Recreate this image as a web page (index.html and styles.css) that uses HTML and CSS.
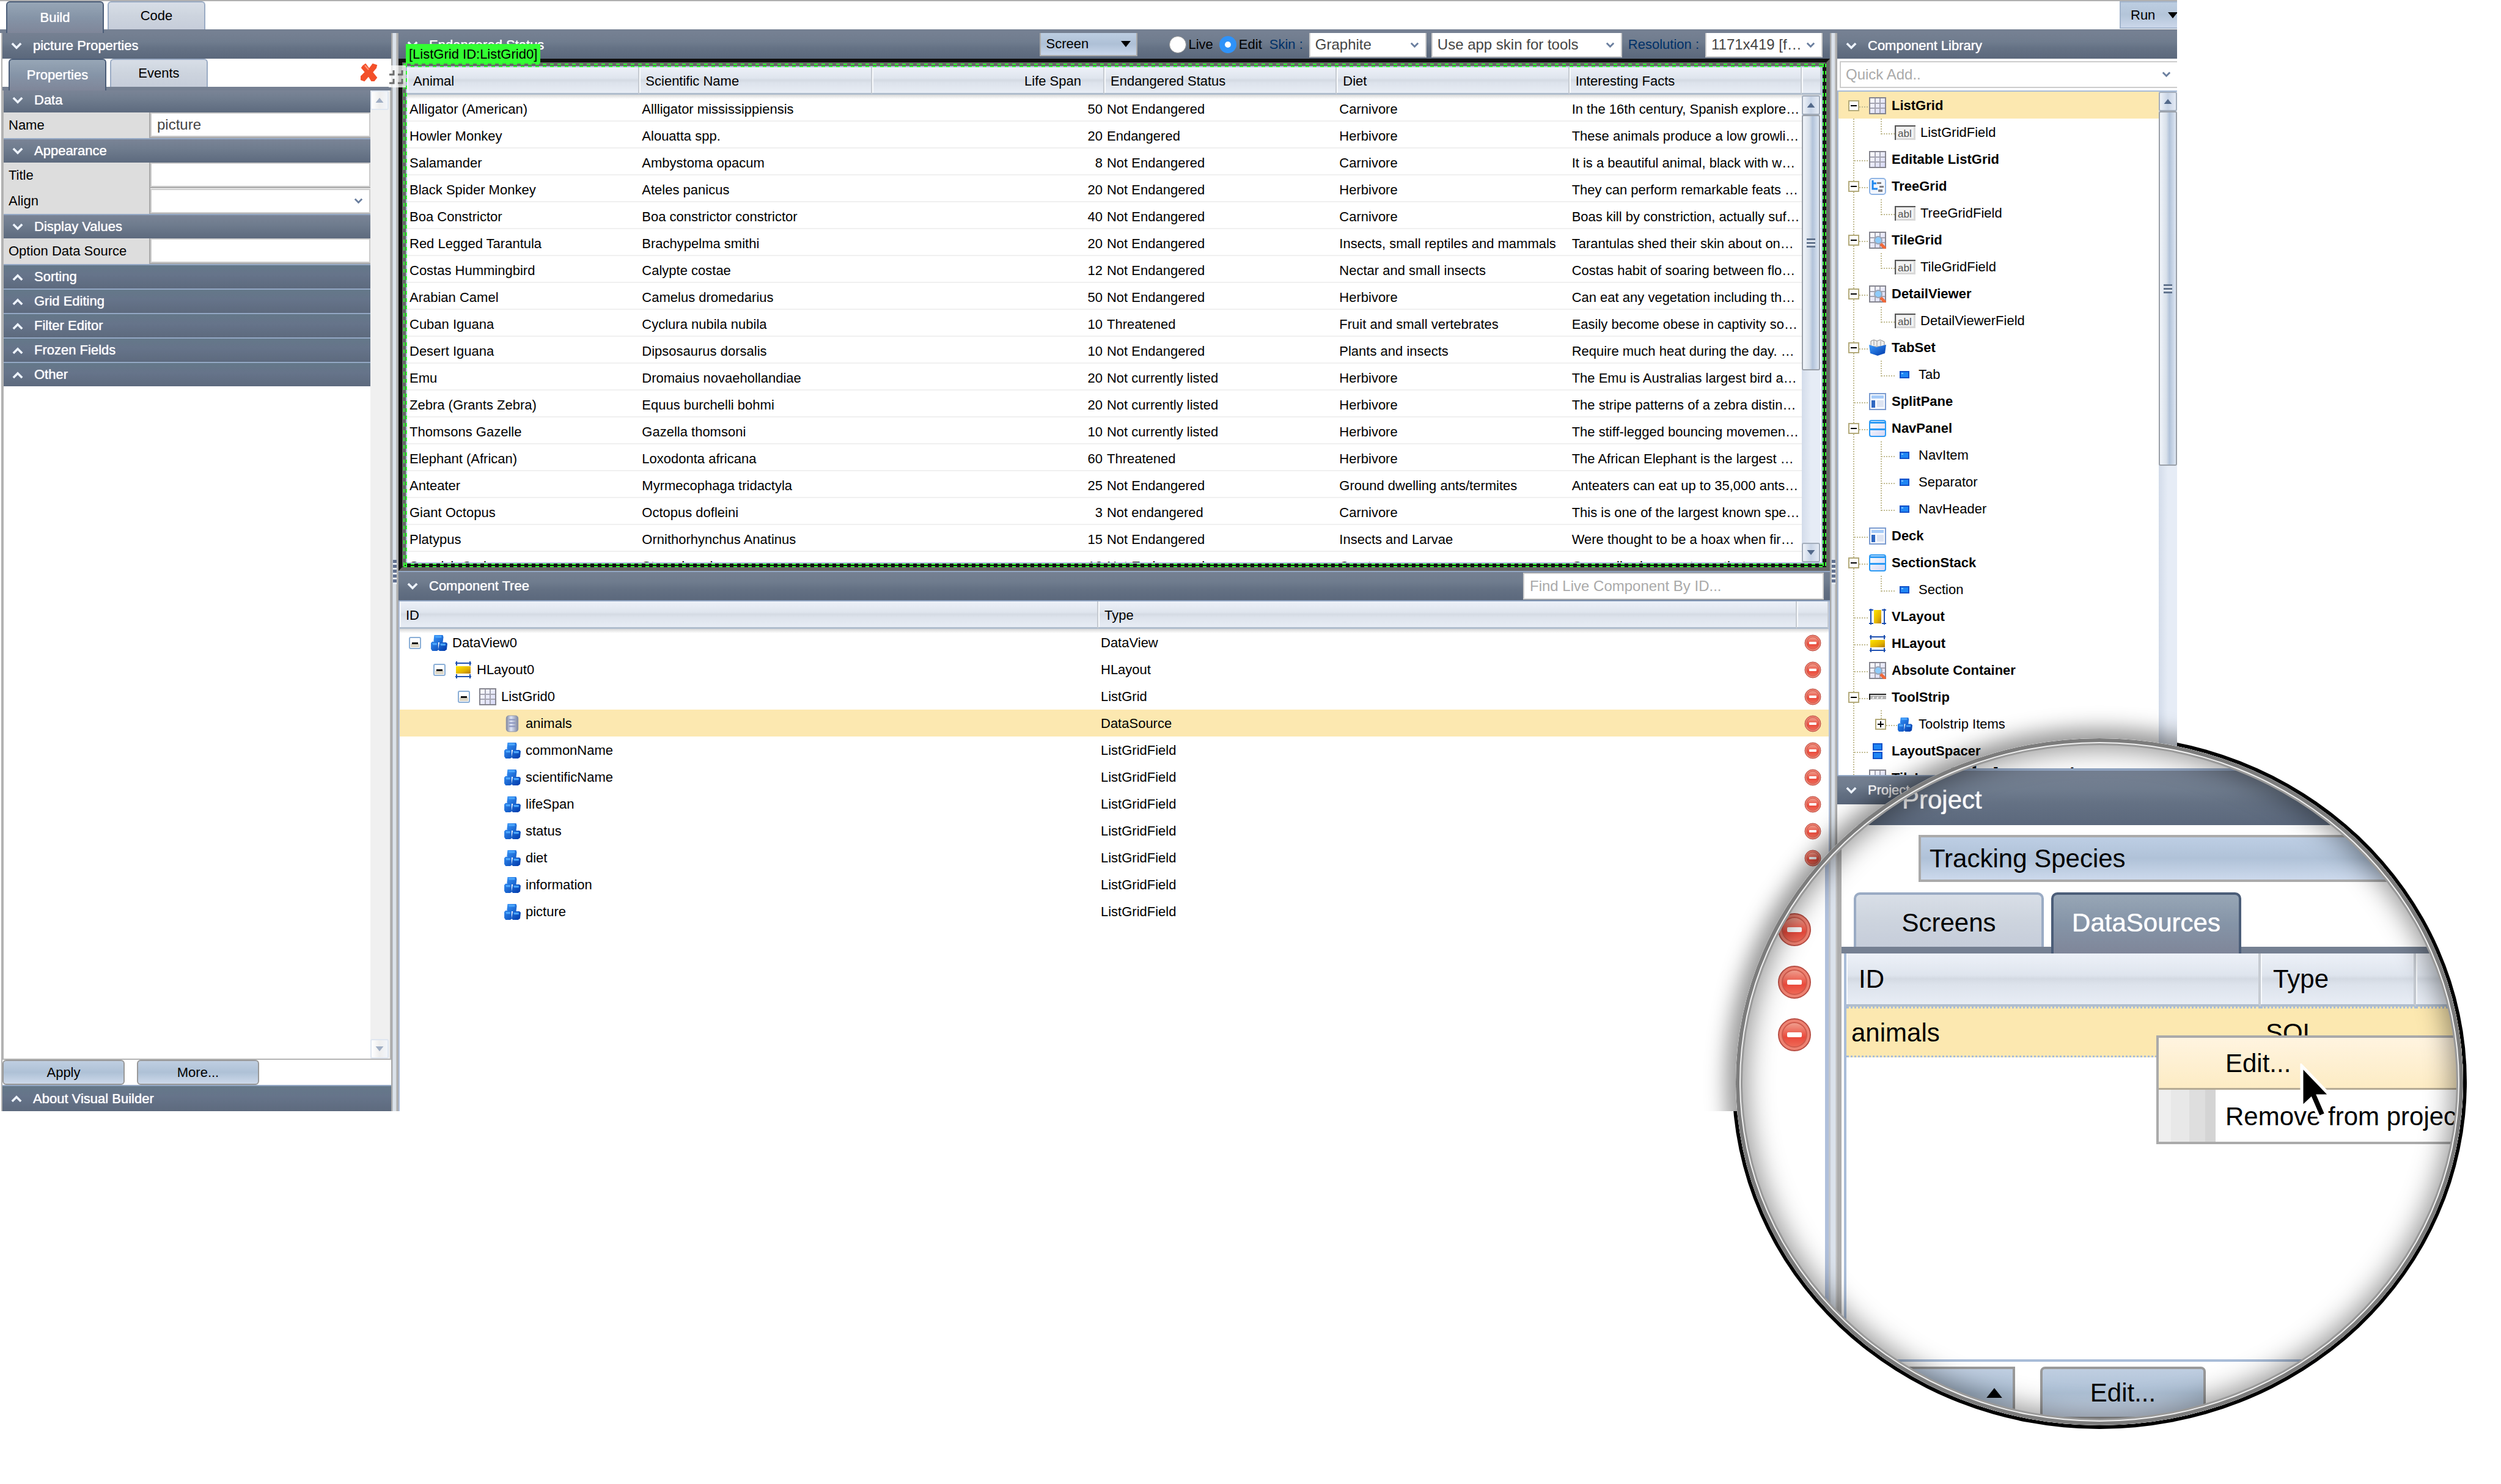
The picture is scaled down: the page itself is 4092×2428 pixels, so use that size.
FILE: index.html
```html
<!DOCTYPE html>
<html lang="en">
<head>
<meta charset="utf-8">
<title>Visual Builder</title>
<link rel="stylesheet" href="styles.css">
</head>
<body>
<svg class="defs" aria-hidden="true">
  <defs>
    <linearGradient id="gBlue" x1="0" y1="0" x2="1" y2="1"><stop offset="0" stop-color="#3a9bff"/><stop offset="1" stop-color="#0038a8"/></linearGradient>
    <linearGradient id="gGold" x1="0" y1="0" x2="1" y2="1"><stop offset="0" stop-color="#ffe600"/><stop offset=".6" stop-color="#e3b300"/><stop offset="1" stop-color="#b07800"/></linearGradient>
    <linearGradient id="gRed" x1="0" y1="0" x2="0" y2="1"><stop offset="0" stop-color="#f0a090"/><stop offset=".6" stop-color="#ea4a3c"/><stop offset="1" stop-color="#ee6a58"/></linearGradient>
    <linearGradient id="gCell" x1="0" y1="0" x2="1" y2="1"><stop offset="0" stop-color="#ffffff"/><stop offset="1" stop-color="#d4d6f4"/></linearGradient>
    <linearGradient id="gDb" x1="0" y1="0" x2="1" y2="0"><stop offset="0" stop-color="#7f869c"/><stop offset=".4" stop-color="#dfe5f8"/><stop offset="1" stop-color="#7f869c"/></linearGradient>
  </defs>
  <symbol id="down" viewBox="0 0 20 14"><path d="M2 2l8 8 8-8" fill="none" stroke="currentColor" stroke-width="4"/></symbol>
  <symbol id="up" viewBox="0 0 20 14"><path d="M2 12l8-8 8 8" fill="none" stroke="currentColor" stroke-width="4"/></symbol>
  <symbol id="caret" viewBox="0 0 16 10"><path d="M0 0h16L8 10z" fill="currentColor"/></symbol>
  <symbol id="caretup" viewBox="0 0 16 10"><path d="M0 10h16L8 0z" fill="currentColor"/></symbol>
  <symbol id="minus" viewBox="0 0 18 18"><path d="M1 1h16v16H1z" fill="#fff" stroke="#b3aa7a" stroke-width="2"/><path d="M4 8h10v2H4z" fill="#000"/></symbol>
  <symbol id="plus" viewBox="0 0 18 18"><path d="M1 1h16v16H1z" fill="#fff" stroke="#b3aa7a" stroke-width="2"/><path d="M4 8h10v2H4zM8 4h2v10H8z" fill="#000"/></symbol>
  <symbol id="fold" viewBox="0 0 20 20"><rect x="1" y="1" width="18" height="18" rx="2" fill="#fff" stroke="#8aaed6" stroke-width="2"/><path d="M3 11h14v6H3z" fill="#dcd6c6"/><path d="M5 9h10v3H5z" fill="#111"/></symbol>
  <symbol id="grid" viewBox="0 0 28 28"><path d="M1 1h26v26H1z" fill="url(#gCell)" stroke="#85858f" stroke-width="2"/><path d="M10 2v24M18 2v24M2 10h24M2 18h24" stroke="#a5a5b2" stroke-width="2"/></symbol>
  <symbol id="tile" viewBox="0 0 28 28"><use href="#grid"/><path d="M19 20l8 8" stroke="#f0693a" stroke-width="5"/><circle cx="15" cy="14" r="6" fill="#8ecbfa" stroke="#9aa4b4" stroke-width="2"/></symbol>
  <symbol id="treegrid" viewBox="0 0 28 28"><rect x="1" y="1" width="26" height="26" rx="4" fill="#f2f6fe" stroke="#8fb4e4" stroke-width="2"/><path d="M6 4v14h8M6 9h6" fill="none" stroke="#1e87ee" stroke-width="3"/><path d="M13 7h7v3h-7zM17 13h7v3h-7zM15 19h7v4h-7z" fill="#7f7f84"/></symbol>
  <symbol id="tabset" viewBox="0 0 28 28"><path d="M3 3l5-2 5 2 5-2 7 3v8H3z" fill="#eee" stroke="#8a8a8a"/><path d="M8 2v8M13 3v8M19 3v8" stroke="#999"/><path d="M0 9l12 4 16-4-2 14-12 4L2 23z" fill="url(#gBlue)"/></symbol>
  <symbol id="split" viewBox="0 0 28 28"><path d="M1 1h26v26H1z" fill="#f6f9fe" stroke="#7c9cd0" stroke-width="2"/><path d="M4 4h20v5H4z" fill="#a6cbf8"/><path d="M4 12h6v12H4z" fill="#2f68c2"/><path d="M13 12h11v11H13z" fill="#dde4f2"/></symbol>
  <symbol id="nav" viewBox="0 0 28 28"><rect x="1" y="1" width="26" height="26" rx="3" fill="url(#gCell)" stroke="#2c9af4" stroke-width="2"/><path d="M1 3h26v3H1zM1 14h26v3H1z" fill="#2c9af4"/></symbol>
  <symbol id="block" viewBox="0 0 16 12"><path d="M0 0h16v12H0z" fill="#0f50c8"/><path d="M2 2h12v8H2z" fill="#1f86f4"/><path d="M3 3h3v2H3z" fill="#7cc0ff"/></symbol>
  <symbol id="spacer" viewBox="0 0 28 28"><path d="M6 1h16v12H6zM6 15h16v12H6z" fill="#0f50c8"/><path d="M8 3h12v8H8zM8 17h12v8H8z" fill="#1f86f4"/></symbol>
  <symbol id="vlay" viewBox="0 0 28 28"><path d="M8 3h12v22H8z" fill="url(#gGold)"/><path d="M3 1v26M25 1v26M0 3h7M0 25h7M21 3h7M21 25h7" stroke="#1d4fb0" stroke-width="2"/></symbol>
  <symbol id="hlay" viewBox="0 0 28 28"><path d="M2 8h24v12H2z" fill="url(#gGold)"/><path d="M1 3h26M1 25h26M3 0v7M25 0v7M3 21v7M25 21v7" stroke="#1d4fb0" stroke-width="2"/></symbol>
  <symbol id="strip" viewBox="0 0 28 28"><path d="M0 8h28v2H0zM0 8h2v10H0z" fill="#222"/><path d="M2 11h26v6H2z" fill="#b4b4b4"/><path d="M5 16l3-4v4zM12 16l3-4v4zM19 16l3-4v4z" fill="#fff"/></symbol>
  <symbol id="cubes" viewBox="0 0 26 26"><path d="M6 1h13l1 3-1 8H7L5 10zM1 13l2-2h9v13l-2 1H3l-2-3zM14 12h10l2 2-1 9-3 2h-8l-2-2z" fill="url(#gBlue)"/><path d="M7 2h10v3H8zM3 13h7v3H4zM15 14h8v3h-7z" fill="#4ba5fb"/></symbol>
  <symbol id="db" viewBox="0 0 26 26"><rect x="4" y="1" width="18" height="24" rx="4" fill="url(#gDb)" stroke="#8d93a8"/><path d="M8 7h10M8 12h10M8 17h10" stroke="#8e98c0" stroke-width="2"/></symbol>
  <symbol id="del" viewBox="0 0 28 28"><circle cx="14" cy="14" r="13" fill="#ee8272" stroke="#b84e44"/><circle cx="14" cy="14" r="10" fill="url(#gRed)" stroke="#cf5a4c"/><rect x="8" y="12" width="12" height="4" rx="1" fill="#fff"/></symbol>
  <symbol id="cross" viewBox="0 0 28 30"><path d="M4 4l4-3 6 8 6-8 6 2-1 4-6 7 7 9-4 5-4 0-5-8-7 8-6-2 0-4 8-8-6-7z" fill="#f3502a" stroke="#f3502a" stroke-width="2"/><path d="M7 3l6 7" stroke="#ff9a80" stroke-width="2"/></symbol>
  <symbol id="field" viewBox="0 0 34 24"><path d="M0 0h34v24H0z" fill="#d8d8d8"/><path d="M0 0h34v2H2v22H0z" fill="#555"/><path d="M3 3h28v18H3z" fill="#f2f2f2"/><text x="5" y="19" font-family="Liberation Sans" font-size="17" fill="#555">abl</text></symbol>
</svg>

<div class="page">
  <div class="lens-shadow"></div>

  <div class="workspace">
    <header class="topbar">
      <nav class="tabs"><button class="tab on">Build</button><button class="tab">Code</button></nav>
      <button class="run">Run<svg class="caret"><use href="#caret"/></svg></button>
    </header>

    <div class="columns">
      <aside class="props">
        <h2 class="bar"><svg class="chev"><use href="#down"/></svg>picture Properties</h2>
        <div class="subtabs tabs">
          <button class="tab on">Properties</button><button class="tab">Events</button>
          <svg class="cross"><use href="#cross"/></svg>
        </div>
        <div class="propbox">
          <form class="propform">
            <h3 class="sect first"><svg class="chev"><use href="#down"/></svg>Data</h3>
            <div class="prop"><label for="p1">Name</label><input id="p1" value="picture"></div>
            <h3 class="sect"><svg class="chev"><use href="#down"/></svg>Appearance</h3>
            <div class="prop"><label for="p2">Title</label><input id="p2"></div>
            <div class="prop"><label for="p3">Align</label><span class="pick"><select id="p3"><option></option></select><svg class="pchev"><use href="#down"/></svg></span></div>
            <h3 class="sect"><svg class="chev"><use href="#down"/></svg>Display Values</h3>
            <div class="prop"><label for="p4">Option Data Source</label><input id="p4"></div>
            <h3 class="sect shut"><svg class="chev"><use href="#up"/></svg>Sorting</h3>
            <h3 class="sect shut"><svg class="chev"><use href="#up"/></svg>Grid Editing</h3>
            <h3 class="sect shut"><svg class="chev"><use href="#up"/></svg>Filter Editor</h3>
            <h3 class="sect shut"><svg class="chev"><use href="#up"/></svg>Frozen Fields</h3>
            <h3 class="sect shut"><svg class="chev"><use href="#up"/></svg>Other</h3>
          </form>
          <div class="scroll idle"><i class="sbtn"><svg><use href="#caretup"/></svg></i><i class="track"></i><i class="sbtn"><svg><use href="#caret"/></svg></i></div>
        </div>
        <div class="actions"><button class="btn">Apply</button><button class="btn">More...</button></div>
        <h2 class="bar about"><svg class="chev"><use href="#up"/></svg>About Visual Builder</h2>
      </aside>

      <div class="splitter"><i class="grip"></i></div>

      <main class="center">
        <div class="bar tools">
          <svg class="chev"><use href="#down"/></svg><h2>Endangered Status</h2>
          <button class="screen">Screen<svg class="caret"><use href="#caret"/></svg></button>
          <label class="radio"><input type="radio" name="mode">Live</label>
          <label class="radio"><input type="radio" name="mode" checked>Edit</label>
          <label class="cap" for="skin">Skin :</label>
          <span class="pick skin"><select id="skin"><option>Graphite</option></select><svg class="pchev"><use href="#down"/></svg></span>
          <span class="pick toolskin"><select aria-label="Tool skin"><option>Use app skin for tools</option></select><svg class="pchev"><use href="#down"/></svg></span>
          <label class="cap" for="res">Resolution :</label>
          <span class="pick skin"><select id="res"><option>1171x419 [f…</option></select><svg class="pchev"><use href="#down"/></svg></span>
        </div>

        <div class="frame"><div class="frame-in"><div class="canvas">
          <table class="grid animals">
            <colgroup><col><col><col><col><col><col><col class="c-scroll"></colgroup>
            <thead><tr><th>Animal</th><th>Scientific Name</th><th class="num">Life Span</th><th>Endangered Status</th><th>Diet</th><th>Interesting Facts</th><th></th></tr></thead>
            <tbody>
              <tr><td>Alligator (American)</td><td>Allligator mississippiensis</td><td>50</td><td>Not Endangered</td><td>Carnivore</td><td>In the 16th century, Spanish explore…</td><td></td></tr>
              <tr><td>Howler Monkey</td><td>Alouatta spp.</td><td>20</td><td>Endangered</td><td>Herbivore</td><td>These animals produce a low growli…</td><td></td></tr>
              <tr><td>Salamander</td><td>Ambystoma opacum</td><td>8</td><td>Not Endangered</td><td>Carnivore</td><td>It is a beautiful animal, black with w…</td><td></td></tr>
              <tr><td>Black Spider Monkey</td><td>Ateles panicus</td><td>20</td><td>Not Endangered</td><td>Herbivore</td><td>They can perform remarkable feats …</td><td></td></tr>
              <tr><td>Boa Constrictor</td><td>Boa constrictor constrictor</td><td>40</td><td>Not Endangered</td><td>Carnivore</td><td>Boas kill by constriction, actually suf…</td><td></td></tr>
              <tr><td>Red Legged Tarantula</td><td>Brachypelma smithi</td><td>20</td><td>Not Endangered</td><td>Insects, small reptiles and mammals</td><td>Tarantulas shed their skin about on…</td><td></td></tr>
              <tr><td>Costas Hummingbird</td><td>Calypte costae</td><td>12</td><td>Not Endangered</td><td>Nectar and small insects</td><td>Costas habit of soaring between flo…</td><td></td></tr>
              <tr><td>Arabian Camel</td><td>Camelus dromedarius</td><td>50</td><td>Not Endangered</td><td>Herbivore</td><td>Can eat any vegetation including th…</td><td></td></tr>
              <tr><td>Cuban Iguana</td><td>Cyclura nubila nubila</td><td>10</td><td>Threatened</td><td>Fruit and small vertebrates</td><td>Easily become obese in captivity so…</td><td></td></tr>
              <tr><td>Desert Iguana</td><td>Dipsosaurus dorsalis</td><td>10</td><td>Not Endangered</td><td>Plants and insects</td><td>Require much heat during the day. …</td><td></td></tr>
              <tr><td>Emu</td><td>Dromaius novaehollandiae</td><td>20</td><td>Not currently listed</td><td>Herbivore</td><td>The Emu is Australias largest bird a…</td><td></td></tr>
              <tr><td>Zebra (Grants Zebra)</td><td>Equus burchelli bohmi</td><td>20</td><td>Not currently listed</td><td>Herbivore</td><td>The stripe patterns of a zebra distin…</td><td></td></tr>
              <tr><td>Thomsons Gazelle</td><td>Gazella thomsoni</td><td>10</td><td>Not currently listed</td><td>Herbivore</td><td>The stiff-legged bouncing movemen…</td><td></td></tr>
              <tr><td>Elephant (African)</td><td>Loxodonta africana</td><td>60</td><td>Threatened</td><td>Herbivore</td><td>The African Elephant is the largest …</td><td></td></tr>
              <tr><td>Anteater</td><td>Myrmecophaga tridactyla</td><td>25</td><td>Not Endangered</td><td>Ground dwelling ants/termites</td><td>Anteaters can eat up to 35,000 ants…</td><td></td></tr>
              <tr><td>Giant Octopus</td><td>Octopus dofleini</td><td>3</td><td>Not endangered</td><td>Carnivore</td><td>This is one of the largest known spe…</td><td></td></tr>
              <tr><td>Platypus</td><td>Ornithorhynchus Anatinus</td><td>15</td><td>Not Endangered</td><td>Insects and Larvae</td><td>Were thought to be a hoax when fir…</td><td></td></tr>
              <tr><td>Spanish Crab</td><td>Stenorhynchus</td><td>12</td><td>Not Endangered</td><td>Crustaceans</td><td>Generally slow creatures that roam …</td><td></td></tr>
            </tbody>
          </table>
          <div class="scroll over"><i class="sbtn"><svg><use href="#caretup"/></svg></i><i class="thumb"></i><i class="track"></i><i class="sbtn"><svg><use href="#caret"/></svg></i></div>
        </div></div>
          <div class="marquee"></div>
          <div class="tag">[ListGrid ID:ListGrid0]</div>
          <svg class="corners" viewBox="0 0 28 36"><path d="M0 0h28v36H0z" fill="#fff" fill-opacity=".75"/><path d="M1 15h7V8M15 15h7V8M1 29h7v-7M15 29h7v-7" fill="none" stroke="#6b6b6b" stroke-width="3"/></svg>
        </div>

        <div class="bar treebar"><svg class="chev"><use href="#down"/></svg><h2>Component Tree</h2><input class="find" placeholder="Find Live Component By ID..." aria-label="Find Live Component By ID"></div>
        <div class="treebox">
          <table class="grid ctree">
            <colgroup><col><col><col class="c-del"></colgroup>
            <thead><tr><th>ID</th><th>Type</th><th></th></tr></thead>
            <tbody>
              <tr><td><div class="node l0"><svg class="fold"><use href="#fold"/></svg><svg class="ic"><use href="#cubes"/></svg>DataView0</div></td><td>DataView</td><td><svg class="del"><use href="#del"/></svg></td></tr>
              <tr><td><div class="node l1"><svg class="fold"><use href="#fold"/></svg><svg class="ic"><use href="#hlay"/></svg>HLayout0</div></td><td>HLayout</td><td><svg class="del"><use href="#del"/></svg></td></tr>
              <tr><td><div class="node l2"><svg class="fold"><use href="#fold"/></svg><svg class="ic"><use href="#grid"/></svg>ListGrid0</div></td><td>ListGrid</td><td><svg class="del"><use href="#del"/></svg></td></tr>
              <tr class="sel"><td><div class="node l3"><svg class="ic"><use href="#db"/></svg>animals</div></td><td>DataSource</td><td><svg class="del"><use href="#del"/></svg></td></tr>
              <tr><td><div class="node l3"><svg class="ic"><use href="#cubes"/></svg>commonName</div></td><td>ListGridField</td><td><svg class="del"><use href="#del"/></svg></td></tr>
              <tr><td><div class="node l3"><svg class="ic"><use href="#cubes"/></svg>scientificName</div></td><td>ListGridField</td><td><svg class="del"><use href="#del"/></svg></td></tr>
              <tr><td><div class="node l3"><svg class="ic"><use href="#cubes"/></svg>lifeSpan</div></td><td>ListGridField</td><td><svg class="del"><use href="#del"/></svg></td></tr>
              <tr><td><div class="node l3"><svg class="ic"><use href="#cubes"/></svg>status</div></td><td>ListGridField</td><td><svg class="del"><use href="#del"/></svg></td></tr>
              <tr><td><div class="node l3"><svg class="ic"><use href="#cubes"/></svg>diet</div></td><td>ListGridField</td><td><svg class="del"><use href="#del"/></svg></td></tr>
              <tr><td><div class="node l3"><svg class="ic"><use href="#cubes"/></svg>information</div></td><td>ListGridField</td><td><svg class="del"><use href="#del"/></svg></td></tr>
              <tr><td><div class="node l3"><svg class="ic"><use href="#cubes"/></svg>picture</div></td><td>ListGridField</td><td><svg class="del"><use href="#del"/></svg></td></tr>
            </tbody>
          </table>
        </div>
      </main>

      <div class="splitter"><i class="grip"></i></div>

      <aside class="library">
        <h2 class="bar"><svg class="chev"><use href="#down"/></svg>Component Library</h2>
        <div class="quick"><input placeholder="Quick Add.." aria-label="Quick Add"><svg class="pchev"><use href="#down"/></svg></div>
        <div class="libbox">
          <ul class="lib">
            <li><div class="row sel"><svg class="ex"><use href="#minus"/></svg><svg class="ic"><use href="#grid"/></svg>ListGrid</div>
              <ul><li><div class="row"><svg class="fi"><use href="#field"/></svg>ListGridField</div></li></ul></li>
            <li><div class="row"><i class="ex"></i><svg class="ic"><use href="#grid"/></svg>Editable ListGrid</div></li>
            <li><div class="row"><svg class="ex"><use href="#minus"/></svg><svg class="ic"><use href="#treegrid"/></svg>TreeGrid</div>
              <ul><li><div class="row"><svg class="fi"><use href="#field"/></svg>TreeGridField</div></li></ul></li>
            <li><div class="row"><svg class="ex"><use href="#minus"/></svg><svg class="ic"><use href="#tile"/></svg>TileGrid</div>
              <ul><li><div class="row"><svg class="fi"><use href="#field"/></svg>TileGridField</div></li></ul></li>
            <li><div class="row"><svg class="ex"><use href="#minus"/></svg><svg class="ic"><use href="#tile"/></svg>DetailViewer</div>
              <ul><li><div class="row"><svg class="fi"><use href="#field"/></svg>DetailViewerField</div></li></ul></li>
            <li><div class="row"><svg class="ex"><use href="#minus"/></svg><svg class="ic"><use href="#tabset"/></svg>TabSet</div>
              <ul><li><div class="row"><svg class="bl"><use href="#block"/></svg>Tab</div></li></ul></li>
            <li><div class="row"><i class="ex"></i><svg class="ic"><use href="#split"/></svg>SplitPane</div></li>
            <li><div class="row"><svg class="ex"><use href="#minus"/></svg><svg class="ic"><use href="#nav"/></svg>NavPanel</div>
              <ul><li><div class="row"><svg class="bl"><use href="#block"/></svg>NavItem</div></li>
                <li><div class="row"><svg class="bl"><use href="#block"/></svg>Separator</div></li>
                <li><div class="row"><svg class="bl"><use href="#block"/></svg>NavHeader</div></li></ul></li>
            <li><div class="row"><i class="ex"></i><svg class="ic"><use href="#split"/></svg>Deck</div></li>
            <li><div class="row"><svg class="ex"><use href="#minus"/></svg><svg class="ic"><use href="#nav"/></svg>SectionStack</div>
              <ul><li><div class="row"><svg class="bl"><use href="#block"/></svg>Section</div></li></ul></li>
            <li><div class="row"><i class="ex"></i><svg class="ic"><use href="#vlay"/></svg>VLayout</div></li>
            <li><div class="row"><i class="ex"></i><svg class="ic"><use href="#hlay"/></svg>HLayout</div></li>
            <li><div class="row"><i class="ex"></i><svg class="ic"><use href="#tile"/></svg>Absolute Container</div></li>
            <li><div class="row"><svg class="ex"><use href="#minus"/></svg><svg class="ic"><use href="#strip"/></svg>ToolStrip</div>
              <ul><li><div class="row nested"><svg class="ex"><use href="#plus"/></svg><svg class="cu"><use href="#cubes"/></svg>Toolstrip Items</div></li></ul></li>
            <li><div class="row"><i class="ex"></i><svg class="ic"><use href="#spacer"/></svg>LayoutSpacer</div></li>
            <li><div class="row"><i class="ex"></i><svg class="ic"><use href="#grid"/></svg>TileLayout</div></li>
          </ul>
          <div class="scroll"><i class="sbtn"><svg><use href="#caretup"/></svg></i><i class="thumb tall"></i><i class="track"></i></div>
        </div>
        <h2 class="bar projbar"><svg class="chev"><use href="#down"/></svg>Project</h2>
        <div class="projbody"></div>
      </aside>
    </div>
    <div class="halo"></div>
  </div>

  <section class="lens">
    <div class="lens-in">
      <div class="lens-del"><svg><use href="#del"/></svg><svg><use href="#del"/></svg><svg><use href="#del"/></svg></div>
      <div class="lens-split"></div>
      <div class="lens-main">
        <div class="lens-lib">TileLayout</div>
        <h2 class="bar lens-bar">Project</h2>
        <button class="lens-project">Tracking Species</button>
        <nav class="tabs lens-tabs"><button class="tab">Screens</button><button class="tab on">DataSources</button></nav>
        <div class="lens-data">
          <table class="grid">
            <colgroup><col class="c-id"><col class="c-type"><col></colgroup>
            <thead><tr><th>ID</th><th>Type</th><th></th></tr></thead>
            <tbody><tr><td>animals</td><td>SQL</td><td></td></tr></tbody>
          </table>
        </div>
        <div class="lens-foot"><button class="btn drop" aria-label="More actions"><svg class="caret"><use href="#caretup"/></svg></button><button class="btn">Edit...</button></div>
      </div>
    </div>
    <div class="menu"><button class="hot">Edit...</button><button>Remove from project</button></div>
    <svg class="cursor" viewBox="0 0 52 92"><path d="M3 4v68l15-14 13 30 12-5-13-30h20z" fill="#000" stroke="#fff" stroke-width="5"/></svg>
    <div class="ring"></div>
  </section>
</div>
</body>
</html>
```
FILE: styles.css
```css
*{box-sizing:border-box}
body{margin:0;background:#fff;color:#000;font-family:"Liberation Sans",Arial,sans-serif;font-size:22px;line-height:26px}
h2,h3{margin:0;font-size:22px;font-weight:400;line-height:26px}
button,input,select{margin:0;padding:0;border:0;border-radius:0;font:inherit;color:inherit;background:none;outline:0}
select{appearance:none}
ul{list-style:none;margin:0;padding:0}
i{font-style:normal}
svg{flex:none;display:block}
.defs{position:absolute;width:0;height:0}

.page{position:relative;isolation:isolate;min-height:100vh;overflow:hidden}
.workspace{position:relative;margin-right:530px;height:calc(100vh - 610px);min-height:1400px;background:#fff;overflow:hidden;display:flex;flex-direction:column}

/* top tabs */
.topbar{flex:none;display:flex;justify-content:space-between;align-items:flex-start;height:54px;border-top:2px solid #b0b0b0;border-bottom:6px solid #758092;padding-left:10px}
.tabs{display:flex;gap:6px}
.tab{width:160px;height:46px;border:2px solid #9aabc4;border-bottom:0;border-radius:6px 6px 0 0;background:linear-gradient(#d8dee7,#cdd4de 50%,#c6cdda)}
.tab.on{height:52px;border-color:#4b5d78;background:linear-gradient(#97a6b6,#8594a7 50%,#7f8699);color:#fff;text-shadow:0 0 1px #fff}
.run{display:flex;align-items:center;justify-content:space-between;width:94px;height:45px;padding-left:16px;border:solid #a3b5cd;border-width:2px 0 2px 2px;background:linear-gradient(#bccde1,#b4c5d9 50%,#cbd7ea)}
.run .caret{margin-right:-1px}
.caret{width:16px;height:10px}

.columns{flex:1;min-height:0;display:grid;grid-template-columns:640px 12px minmax(0,1fr) 12px 556px}
.bar{flex:none;display:flex;align-items:center;height:42px;padding-left:14px;background:linear-gradient(#758092,#6f7c8e 35%,#647184 60%,#5b687c);color:#fff;text-shadow:0 0 1px #fff}
.chev{width:18px;height:13px;margin-right:18px;color:#eef4ff}
.pchev{width:15px;height:10px;color:#6b7f9f}

/* properties */
.props{display:flex;flex-direction:column;min-height:0;margin-left:2px;border-left:2px solid #b0b0b0}
.subtabs{flex:none;height:52px;border-bottom:6px solid #758092;padding-left:10px}
.cross{width:28px;height:30px;margin:8px 22px 0 auto}
.propbox{flex:1;min-height:0;display:flex;border:solid #b4b4b4;border-width:0 2px 2px}
.propform{flex:1}
.sect{display:flex;align-items:center;height:40px;padding-left:14px;border-top:2px solid #93a7c4;background:linear-gradient(#7a8496,#6f7c8e 40%,#5d6a7e);color:#fff;text-shadow:0 0 1px #fff}
.sect.first{height:36px;border-top:0}
.sect.first{padding-bottom:4px}
.sect.shut{background:linear-gradient(#647889,#66748a 40%,#5d6a7e)}
.prop{display:grid;grid-template-columns:240px minmax(0,1fr);height:42px;border-bottom:2px solid #aaa}
.prop label{padding-left:8px;line-height:42px;background:#ddd;border-right:2px solid #aaa}
.prop input,.prop select{height:40px;width:100%;border:2px solid #ccc;padding:0 9px;font-size:24px;color:#444}
.actions{flex:none;display:flex;gap:20px;height:41px}
.btn{width:200px;height:41px;border:2px solid #999;border-radius:6px;background:linear-gradient(#bfcee1,#aec1d6 50%,#cdd9ea)}
.about{height:43px;border-top:2px solid #93a7c4;background:linear-gradient(#647889,#66748a 40%,#5d6a7e)}

/* scrollbars */
.scroll{flex:none;width:30px;display:flex;flex-direction:column;background:linear-gradient(90deg,#d3dcea,#e6ecf6 50%)}
.sbtn{flex:none;display:flex;align-items:center;justify-content:center;height:32px;border:2px solid #a3adbb;border-radius:3px;background:linear-gradient(90deg,#eef2f8,#c8d4e6 50%,#e4eaf4);color:#53698a}
.sbtn svg{width:14px;height:8px}
.track{flex:1}
.thumb{flex:none;height:418px;border:2px solid #999fa8;border-radius:3px;background:repeating-linear-gradient(#63758f 0 3px,#e3e9f2 3px 6px) center/14px 15px no-repeat,linear-gradient(90deg,#f0f4fa,#d8e0ea 40%,#b2c3da 60%,#dde6f2)}
.thumb.tall{height:580px}
.idle{width:32px;padding-right:2px;background:#f0f0f0}
.idle .sbtn{border-color:#dfe6f0;background:linear-gradient(90deg,#fff,#eee 50%,#f2f5fa);color:#a0aec4}

.splitter{display:flex;align-items:center;justify-content:center;background:linear-gradient(90deg,#a9a9a9 0 2px,#c3cad3 2px 3px,#dbe2ea 3px 8px,#bbb 8px 10px,#a9a9a9 10px)}
.grip{width:6px;height:40px;background:repeating-linear-gradient(#60708f 0 5px,#e8edf4 5px 8px)}

/* centre */
.center{display:flex;flex-direction:column;min-width:0;min-height:0}
.tools{align-items:flex-start;padding-right:12px}
.tools .chev{margin-top:13px}
.tools h2{flex:1;line-height:40px}
.screen{display:flex;align-items:center;justify-content:space-between;width:160px;height:38px;padding:0 9px;border:2px solid #aaa;border-top:0;background:linear-gradient(#bccde1,#aec0d6 50%,#c9d6ea);color:#000;margin-right:52px}
.radio{display:flex;align-items:center;gap:4px;height:38px;color:#000;text-shadow:none;margin-right:10px}
.radio input{appearance:none;width:28px;height:28px;border-radius:50%;background:#fff;border:1px solid #999}
.radio input:checked{border:9px solid #2f92f8}
.cap{line-height:38px;color:#003168;text-shadow:none;margin-left:2px;margin-right:10px}
.pick{display:grid;align-items:center}
.pick>*{grid-area:1/1}
.pick .pchev{justify-self:end;margin-right:12px}
.tools .pick{width:192px;height:40px;margin-right:8px;text-shadow:none}
.tools .pick:last-child{margin-right:0}
.tools .toolskin{width:312px}
.tools select{width:100%;height:40px;padding:0 8px;border:2px solid #ccc;border-top:0;background:#fff;font-size:24px;color:#444}

.frame{position:relative;flex:none;border:6px solid;border-color:#111 #666 #666 #111}
.frame-in{border:6px solid;border-color:#666 #111 #111 #666}
.canvas{position:relative;height:814px;overflow:hidden;border:2px solid #b0c0dc;background:#fff}
.marquee{position:absolute;inset:2px 0 0 2px;
  background:
    repeating-linear-gradient(90deg,#3f3 0 6px,transparent 6px 12px) 0 0/100% 2px no-repeat,
    repeating-linear-gradient(90deg,#3f3 0 6px,transparent 6px 12px) 0 4px/100% 2px no-repeat,
    repeating-linear-gradient(90deg,#3f3 0 6px,transparent 6px 12px) 0 100%/100% 2px no-repeat,
    repeating-linear-gradient(90deg,#3f3 0 6px,transparent 6px 12px) 0 calc(100% - 4px)/100% 2px no-repeat,
    repeating-linear-gradient(#3f3 0 6px,transparent 6px 12px) 0 0/2px 100% no-repeat,
    repeating-linear-gradient(#3f3 0 6px,transparent 6px 12px) 4px 0/2px 100% no-repeat,
    repeating-linear-gradient(#3f3 0 6px,transparent 6px 12px) 100% 0/2px 100% no-repeat,
    repeating-linear-gradient(#3f3 0 6px,transparent 6px 12px) calc(100% - 4px) 0/2px 100% no-repeat}
.tag{position:absolute;left:6px;top:-30px;height:32px;padding:0 5px;line-height:34px;background:#3f3;white-space:nowrap}
.corners{position:absolute;left:-22px;top:5px;width:28px;height:36px}

.grid{width:100%;table-layout:fixed;border-collapse:separate;border-spacing:0}
.grid th{height:45px;padding:3px 0 0 10px;text-align:left;font-weight:400;white-space:nowrap;border-bottom:3px solid #b0bdcd;border-right:2px solid #c6cbd2;box-shadow:inset 2px 0 #f8fafc;background:linear-gradient(#edf1f8,#dfe5ee 42%,#d4dae3 50%,#dde3ec 62%,#e8edf5)}
.grid td{height:44px;padding:2px 0 0 4px;white-space:nowrap}
.grid tbody tr:first-child td{background:linear-gradient(#d9d9d9,#fff 7px)}
.animals th.num{text-align:right;padding-right:36px}
.animals td{padding-top:5px;border-bottom:2px solid #f0f0f0}
.animals td:nth-child(3){text-align:right;padding-right:3px}
.c-scroll{width:32px}
.c-del{width:52px}
.over{position:absolute;top:46px;right:2px;bottom:0}

.treebar{height:50px;padding:0 10px 0 14px;border:solid #93a7c4;border-width:2px 0}
.treebar h2{flex:1}
.find{width:492px;height:44px;padding:0 9px;border:2px solid #ccc;background:#fff;font-size:24px;color:#444}
.find::placeholder,.quick input::placeholder{color:#aaa;opacity:1}
.treebox{flex:1;border:solid #b0c0dc;border-width:0 2px}
.ctree .sel td{background:#fce8b0}
.node{display:flex;align-items:center}
.node .fold{width:20px;height:20px;margin-right:15px}
.node .ic{width:28px;height:28px;margin-right:8px}
.node{padding-left:11px}
.l1{padding-left:51px}
.l2{padding-left:91px}
.l3{padding-left:166px}
.ctree .del{width:28px;height:28px;margin-left:8px}

/* library */
.library{display:flex;flex-direction:column;min-width:0;min-height:0}
.quick{flex:none;display:grid;align-items:center;height:44px;margin:4px 0 4px 4px}
.quick>*{grid-area:1/1}
.quick input{height:44px;width:100%;padding:0 8px;border:2px solid #ccc;border-right:0;font-size:24px}
.quick .pchev{justify-self:end;margin-right:10px}
.libbox{flex:none;height:1120px;display:flex;overflow:hidden;border:solid #a8bcd8;border-width:2px 0 0 2px}
.lib{flex:1}
.lib>li{background:repeating-linear-gradient(#c2bc92 0 2px,transparent 2px 4px) 24px 0/2px 100% no-repeat}
.row{display:flex;align-items:center;height:44px;padding-left:16px;padding-top:2px;font-weight:700;background:repeating-linear-gradient(90deg,#c2bc92 0 2px,transparent 2px 4px) 26px 24px/22px 2px no-repeat}
.row.sel{background-color:#fce8b0}
.ex{flex:none;width:18px;height:18px;margin-right:16px}
.ic{width:28px;height:28px;margin-right:9px}
.lib ul li{background:repeating-linear-gradient(#c2bc92 0 2px,transparent 2px 4px) 69px 0/2px 100% no-repeat}
.lib ul li:last-child{background-size:2px 26px}
.lib ul .row{padding-left:92px;font-weight:400;background-position:70px 24px}
.lib ul .nested{padding-left:60px;background-size:30px 2px}
.nested .ex{margin-right:18px}
.fi{width:34px;height:24px;margin-right:8px}
.bl{width:16px;height:12px;margin:0 15px 0 8px}
.cu{width:25px;height:25px;margin-right:10px}
.projbar{height:48px;border-top:2px solid #93a7c4}
.projbody{flex:1}

/* magnifier */
.halo,.lens,.lens-shadow{position:absolute;top:1208px;right:62px;width:1190px;height:1124px;border-radius:50%}
.halo{right:-468px;box-shadow:0 0 34px 16px rgba(0,0,0,.42)}
.lens-shadow{z-index:-1;box-shadow:0 0 0 6px #000}
.lens{overflow:hidden;background:#fff;font-size:42px;line-height:48px}
.lens-in{display:flex;height:100%}
.lens-del{flex:none;width:146px;display:flex;flex-direction:column;gap:30px;padding:285px 0 0 68px}
.lens-del svg{width:56px;height:56px}
.lens-split{flex:none;width:27px;background:linear-gradient(90deg,#b0c0dc 0 6px,#c2c6cc 6px 8px,#dbe2ec 10px 17px,#c0c0c0 18px 20px,#adadad 20px)}
.lens-main{flex:1;min-width:0;display:flex;flex-direction:column}
.lens-lib{flex:none;height:49px;padding:41px 0 0 175px;overflow:hidden;font-weight:700;line-height:42px}
.lens-bar{height:93px;padding:6px 0 0 99px;border-top:4px solid #93a7c4;font-size:42px}
.lens-project{flex:none;height:77px;margin:16px 0 17px 126px;padding-left:14px;border:4px solid #aaa;text-align:left;background:linear-gradient(#bdcee4,#b0c2d8 50%,#ccd9ec)}
.lens-tabs{flex:none;gap:12px;height:100px;padding-left:20px;border-bottom:11px solid #758092}
.lens-tabs .tab{width:311px;height:89px;padding-top:6px;border-width:4px;border-bottom:0;border-radius:10px 10px 0 0}
.lens-tabs .tab.on{height:100px;padding:0 0 4px}
.lens-data{flex:1;margin-left:4px;border:solid #a8bcd8;border-width:0 0 4px 4px}
.lens-data th{height:87px;padding:0 0 0 20px;border-right:4px solid #c6cbd2;border-bottom:4px solid #b0bdcd}
.lens-data tbody tr:first-child td{height:83px;padding-left:8px;background:#fce8b0;border:dotted #a8bcd8;border-width:3px 0}
.c-id{width:678px}
.c-type{width:254px}
.lens-foot{flex:none;display:flex;gap:41px;height:104px;padding-top:8px}
.lens-foot .btn{width:271px;height:86px;border-width:4px;border-radius:8px}
.lens-foot .drop{display:flex;align-items:center;justify-content:flex-end;width:284px;padding-right:16px;border-radius:0}
.lens-foot .caret{width:28px;height:16px}
.menu{position:absolute;left:688px;top:486px;width:560px;border:4px solid #aaa;background:#fff}
.menu button{display:block;width:100%;height:85px;padding:2px 0 0 109px;text-align:left;white-space:nowrap;background:linear-gradient(90deg,#efefef 0 20px,#e8e8e8 20px 50px,#dedede 50px 76px,#d4d4d4 76px 93px,#fff 93px)}
.menu .hot{border-bottom:3px solid #b5ab95;background:linear-gradient(#fff4e0,#fdecc4)}
.cursor{position:absolute;left:923px;top:532px;width:52px;height:92px}
.ring{position:absolute;inset:0;border-radius:50%;box-shadow:inset 0 0 0 6px #7c7c7c,inset 0 0 0 8px #f0f0f0,inset 0 0 0 11px #999,inset 0 0 44px 18px rgba(0,0,0,.42)}
```
